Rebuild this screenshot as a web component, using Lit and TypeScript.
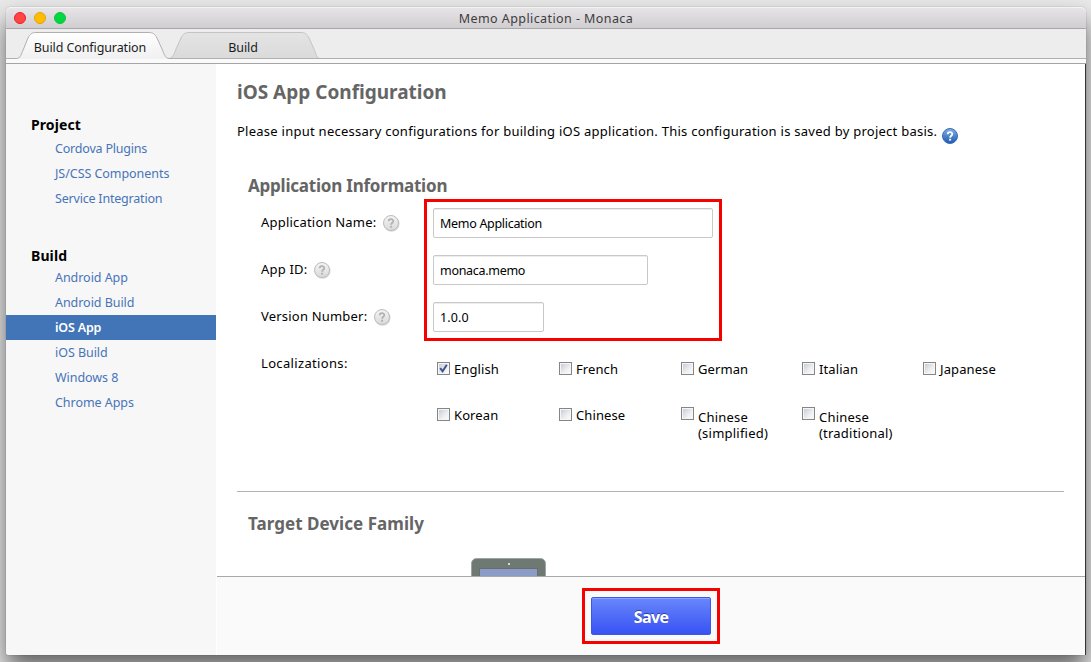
import { LitElement, html, css, svg } from "lit";
import { customElement, property } from "lit/decorators.js";

@customElement("help-icon")
class HelpIcon extends LitElement {
  @property() tone = "gray";
  static styles = css`
    :host { display: block; width: 18px; height: 18px; }
    svg { display: block; }
  `;
  render() {
    const blue = this.tone === "blue";
    return html`<svg width="18" height="18" viewBox="0 0 18 18">
      <defs>
        <linearGradient id="g" x1="0" y1="0" x2="0" y2="1">
          <stop offset="0" stop-color=${blue ? "#7fb0e8" : "#f4f4f4"}></stop>
          <stop offset="1" stop-color=${blue ? "#1f59ae" : "#dadada"}></stop>
        </linearGradient>
      </defs>
      ${blue ? "" : svg`<circle cx="9.6" cy="9.8" r="8" fill="#000" opacity=".15"></circle>`}
      <circle cx="9" cy="9" r="7.5" fill="url(#g)" stroke=${blue ? "#3a6db5" : "#bdbdbd"} stroke-width="1"></circle>
      <path d="M6.7 7.3 C6.7 4.5 11.3 4.5 11.3 7.1 C11.3 8.8 9.1 8.8 9.1 10.7" fill="none"
        stroke=${blue ? "#fff" : "#b2b2b2"} stroke-width="1.8"></path>
      <rect x="8.1" y="11.8" width="2" height="1.8" fill=${blue ? "#fff" : "#b2b2b2"}></rect>
    </svg>`;
  }
}

@customElement("check-item")
class CheckItem extends LitElement {
  @property() label = "";
  @property() note = "";
  @property({ type: Boolean }) checked = false;
  static styles = css`
    :host { display: flex; align-items: flex-start; gap: 4px; }
    .box {
      box-sizing: border-box; width: 13px; height: 13px; flex: none;
      border: 1px solid #858585; padding: 1px; background: #f6f6f6;
    }
    .fill {
      width: 9px; height: 9px;
      background: linear-gradient(135deg, #c9cdd4, #eceef1 60%, #fafafa);
    }
    svg { display: block; overflow: visible; }
    .text { margin-top: -2px; line-height: 18px; white-space: nowrap; letter-spacing: .1px; }
    .text.two { margin-top: 2px; line-height: 16px; letter-spacing: .22px; }
  `;
  render() {
    return html`<div class="box"><div class="fill">
        ${this.checked
          ? html`<svg width="9" height="9" viewBox="0 0 9 9"><path d="M1.2 4.2 L3.6 7.2 L7.8 .8" fill="none" stroke="#3f5591" stroke-width="2"></path></svg>`
          : ""}
      </div></div>
      <div class="text ${this.note ? "two" : ""}">${this.label}${this.note ? html`<br>${this.note}` : ""}</div>`;
  }
}

@customElement("app-root")
class AppRoot extends LitElement {
  static styles = css`
    :host {
      display: block; box-sizing: border-box; width: 1091px; height: 662px;
      padding: 7px 5px 7px 6px; overflow: hidden; background: #e9e9e9;
      font-family: "Noto Sans", "Open Sans", sans-serif; font-size: 13px; color: #000;
    }
    .window {
      position: relative; box-sizing: border-box; width: 1080px; height: 648px;
      display: flex; flex-direction: column; border-radius: 5px 5px 3px 3px; background: #fff;
      box-shadow: 0 0 1px rgba(0,0,0,.5), 0 14px 24px rgba(0,0,0,.58);
    }
    .titlebar {
      position: relative; box-sizing: border-box; height: 22px; border-bottom: 1px solid #a9a7a9;
      border-radius: 5px 5px 0 0; background: linear-gradient(#e7e5e7, #d1ced1);
      box-shadow: inset 0 1px #f4f3f4; display: flex; align-items: center; justify-content: center;
    }
    .lights { position: absolute; left: 8px; top: 5px; display: flex; gap: 8px; }
    .light { box-sizing: border-box; width: 12px; height: 12px; border-radius: 50%; border: 1px solid; }
    .red { background: #ff4444; border-color: #ee1c22; }
    .amber { background: #ffbd00; border-color: #e5a011; }
    .green { background: #00d742; border-color: #11c237; }
    .title { padding-top: 2px; font-size: 12.5px; line-height: 20px; color: #3c3c3c; letter-spacing: .42px; white-space: nowrap; }
    .tabs { position: relative; height: 30px; background: #ededed; display: flex; }
    .tabshapes { position: absolute; left: 0; top: 0; }
    .tab { position: relative; text-align: center; line-height: 38px; height: 30px; font-size: 12.5px; color: #1c1c1c; white-space: nowrap; }
    .tab.one { width: 168px; letter-spacing: -.1px; }
    .tab.two { width: 138px; letter-spacing: -.1px; }
    .strip { box-sizing: border-box; height: 5px; background: #fafafa; border-bottom: 1px solid #a5a5a5; }
    .body { display: flex; flex: 1; min-height: 0; }
    .side { width: 210px; background: #f7f7f7; border-radius: 0 0 0 3px; padding-top: 51px; box-sizing: border-box; }
    .group { margin-bottom: 35px; }
    .group h3 { margin: 0; padding-left: 25px; font-size: 14px; line-height: 19px; font-weight: 700; letter-spacing: .1px; }
    .group:first-child h3 { margin-bottom: 2px; }
    .link { padding-left: 49px; line-height: 25px; height: 25px; font-size: 12.5px; color: #4774b8; white-space: nowrap; letter-spacing: -.05px; }
    .link.tight { letter-spacing: -.2px; }
    .link.active { background: #4275b8; color: #fff; font-weight: 600; letter-spacing: -.2px; }
    .main { margin-left: 1px; flex: 1; display: flex; flex-direction: column; box-sizing: border-box; border-right: 1px solid #333; min-width: 0; }
    .scroll { flex: 1; min-height: 0; overflow: hidden; padding: 0 21px 0 20px; }
    h1, h2 { margin: 0; color: #656565; font-weight: 700; white-space: nowrap; }
    h1 { padding-top: 14px; font-size: 19px; line-height: 28px; }
    h2 { padding-left: 11px; font-size: 17px; line-height: 24px; }
    .intro { display: flex; gap: 4px; height: 24px; margin-top: 15px; line-height: 20px; white-space: nowrap; letter-spacing: .257px; }
    .intro help-icon { margin-top: 6px; }
    .info { margin-top: 29px; letter-spacing: -.22px; }
    .form { margin: 10px 0 0 24px; display: grid; row-gap: 17px; }
    .row { display: flex; height: 30px; }
    .label { width: 172px; display: flex; gap: 6px; line-height: 28px; letter-spacing: .2px; white-space: nowrap; }
    .label help-icon { margin-top: 6px; }
    .locs .label { letter-spacing: .34px; }
    .input {
      box-sizing: border-box; height: 30px; border: 1px solid #c9c9c9; border-radius: 2px; padding: 0 6px;
      font: 12.5px/29px "Noto Sans", sans-serif; color: #000; background: #fff; outline: none;
      box-shadow: inset 0 1px #ededed; letter-spacing: -.3px;
    }
    .name { width: 280px; } .id { width: 215px; } .version { width: 111px; letter-spacing: .1px; }
    .langs { padding: 13px 0 0 4px; display: grid; grid-template-columns: 122px 122px 121px 121px 100px; grid-template-rows: 46px 46px; }
    .up { margin-top: -1px; }
    .locs { height: 142px; }
    .rule { height: 1px; background: #b3b3b3; }
    .family { margin-top: 20px; letter-spacing: .04px; }
    .device { display: block; margin: 22px 0 0 233px; }
    .footer {
      box-sizing: border-box; height: 79px; border-top: 1px solid #a9a9a9; background: #fafafa;
      display: flex; padding: 20px 0 0 374px;
    }
    .save {
      box-sizing: border-box; width: 120px; height: 38px; padding: 0; border: 1px solid #3c58ea; border-radius: 2px;
      background: linear-gradient(#6886fc, #3853f3); box-shadow: inset 0 1px #8ea4fb;
      color: #fff; font: 700 16px/38px "Open Sans", sans-serif; letter-spacing: -.6px; text-shadow: 0 -1px rgba(0,0,60,.45);
    }
    .mark { position: absolute; box-sizing: border-box; border: 3px solid #f70000; pointer-events: none; }
    .mark.fields { left: 418px; top: 192px; width: 298px; height: 142px; }
    .mark.action { left: 576px; top: 581px; width: 138px; height: 56px; }
  `;

  groups = [
    { name: "Project", links: [["Cordova Plugins", "tight"], ["JS/CSS Components", ""], ["Service Integration", "tight"]] },
    { name: "Build", links: [["Android App", ""], ["Android Build", ""], ["iOS App", "active"], ["iOS Build", ""], ["Windows 8", ""], ["Chrome Apps", ""]] },
  ];

  fields = [
    { label: "Application Name:", value: "Memo Application", cls: "name" },
    { label: "App ID:", value: "monaca.memo", cls: "id" },
    { label: "Version Number:", value: "1.0.0", cls: "version" },
  ];

  languages = [
    ["English"], ["French"], ["German"], ["Italian"], ["Japanese"],
    ["Korean"], ["Chinese"], ["Chinese", "(simplified)"], ["Chinese", "(traditional)"],
  ];

  render() {
    return html`<div class="window">
      <div class="titlebar">
        <div class="lights"><i class="light red"></i><i class="light amber"></i><i class="light green"></i></div>
        <div class="title">Memo Application - Monaca</div>
      </div>
      <div class="tabs">
        <svg class="tabshapes" width="1080" height="30" viewBox="0 0 1080 30">
          <defs>
            <linearGradient id="a" x1="0" y1="0" x2="0" y2="1"><stop offset="0" stop-color="#fff"></stop><stop offset="1" stop-color="#f0f0f0"></stop></linearGradient>
            <linearGradient id="b" x1="0" y1="0" x2="0" y2="1"><stop offset="0" stop-color="#e4e4e4"></stop><stop offset="1" stop-color="#dadada"></stop></linearGradient>
          </defs>
          <path d="M162 29.5 C167 29.5 168 25 170 20 L175 9 C177 5 179 3.5 183 3.5 H295 C299 3.5 301 5 303 9 L308 20 C310 25 311 29.5 314 29.5 Z" fill="url(#b)" stroke="#c4c4c4"></path>
          <path d="M10 29.5 C15 29.5 15 25 17.5 20 L22 9 C24 5 26 3.5 30 3.5 H142 C147 3.5 149 5 151 9 L156 20 C158 25 159.5 29.5 163 29.5 V30 H10 Z" fill="url(#a)"></path>
          <path d="M0 29.5 H10 C15 29.5 15 25 17.5 20 L22 9 C24 5 26 3.5 30 3.5 H142 C147 3.5 149 5 151 9 L156 20 C158 25 159.5 29.5 163 29.5 H1080" fill="none" stroke="#b0b0b0"></path>
        </svg>
        <div class="tab one">Build Configuration</div>
        <div class="tab two">Build</div>
      </div>
      <div class="strip"></div>
      <div class="body">
        <nav class="side">
          ${this.groups.map((g) => html`<div class="group"><h3>${g.name}</h3>
            ${g.links.map(([text, cls]) => html`<div class="link ${cls}">${text}</div>`)}
          </div>`)}
        </nav>
        <div class="main">
          <div class="scroll">
            <h1>iOS App Configuration</h1>
            <div class="intro"><span>Please input necessary configurations for building iOS application. This configuration is saved by project basis.</span><help-icon tone="blue"></help-icon></div>
            <h2 class="info">Application Information</h2>
            <div class="form">
              ${this.fields.map((f) => html`<div class="row">
                <div class="label"><span>${f.label}</span><help-icon></help-icon></div>
                <input class="input ${f.cls}" .value=${f.value}>
              </div>`)}
              <div class="row locs">
                <div class="label">Localizations:</div>
                <div class="langs">
                  ${this.languages.map((l) => html`<check-item class=${l[1] ? "up" : ""} label=${l[0]} note=${l[1] ?? ""} ?checked=${l[0] === "English"}></check-item>`)}
                </div>
              </div>
            </div>
            <div class="rule"></div>
            <h2 class="family">Target Device Family</h2>
            <svg class="device" width="77" height="40" viewBox="0 0 77 40">
              <rect x="1.5" y=".5" width="74" height="60" rx="5" fill="#6f7973" stroke="#a0a5a2"></rect>
              <rect x="38" y="5" width="2" height="2" fill="#d5d8d6"></rect>
              <rect x="9.5" y="10.5" width="58" height="40" fill="#8b9cc6" stroke="#6a6c6d"></rect>
            </svg>
          </div>
          <div class="footer"><button class="save">Save</button></div>
        </div>
      </div>
      <div class="mark fields"></div>
      <div class="mark action"></div>
    </div>`;
  }
}
